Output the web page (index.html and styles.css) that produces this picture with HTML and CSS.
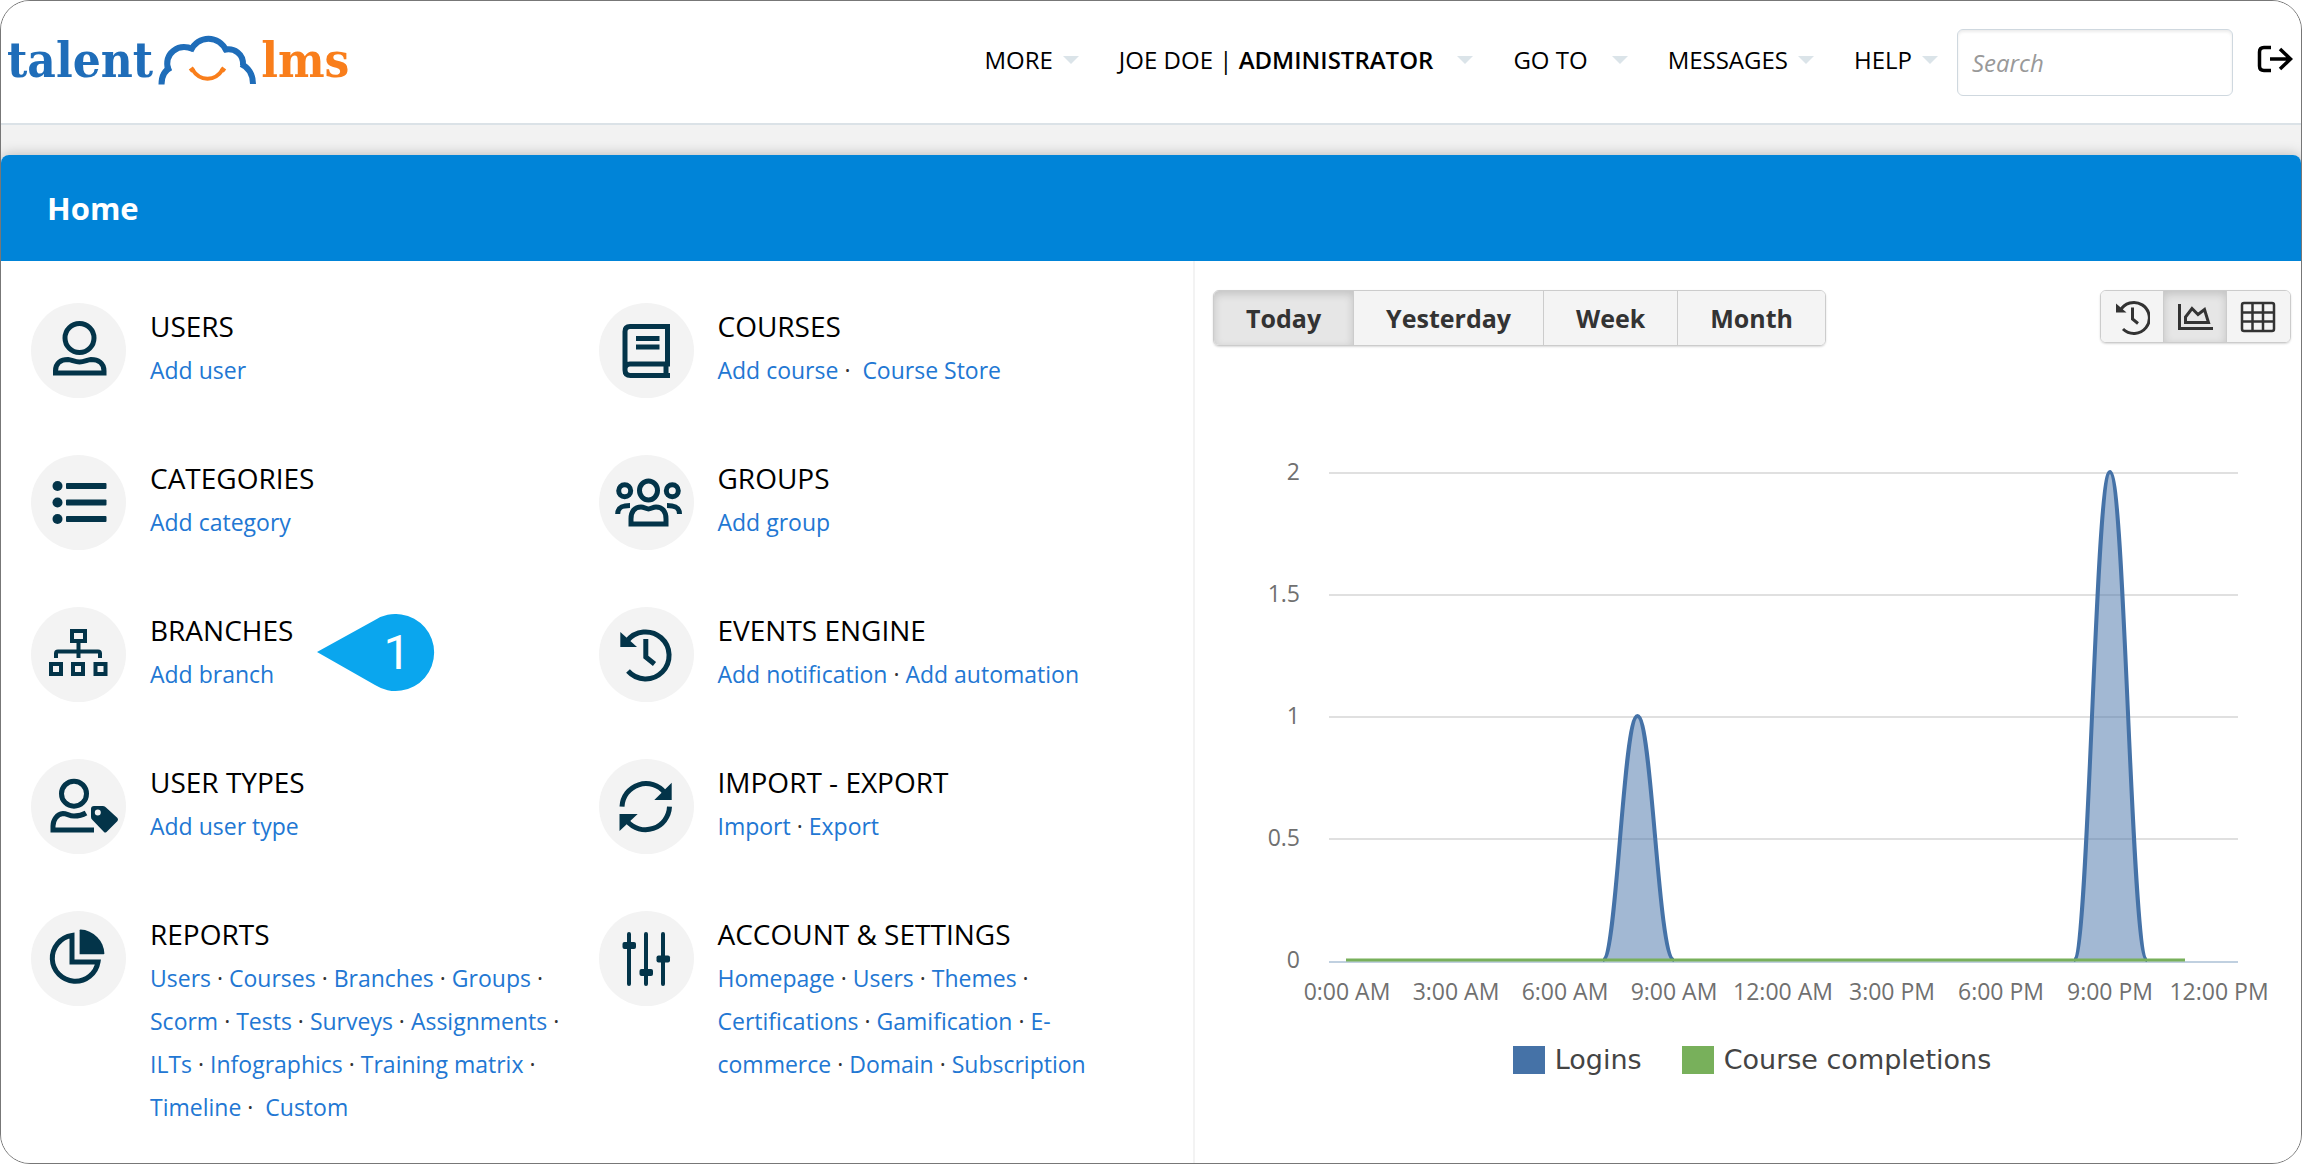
FILE: index.html
```html
<!DOCTYPE html>
<html lang="en">
<head>
<meta charset="utf-8">
<title>TalentLMS - Home</title>
<link rel="stylesheet" href="styles.css">
</head>
<body>
<div class="frame">
  <header class="topbar">
    <a class="logo" href="#" aria-label="talentlms">
      <span class="logo-talent">talent</span>
      <svg class="logo-cloud" viewBox="156 33 102 52" aria-hidden="true">
        <g fill="none" stroke="#1f6db9" stroke-width="6">
          <path d="M161.500 83.500C161.500 75 165 69 171 66.500"/>
          <path d="M168 68.500C164 52 178 42 193 48"/>
          <path d="M190.500 50C198 33.500 219 33.500 226.500 50"/>
          <path d="M223.500 49C234 46 244 53 243 64.500"/>
          <path d="M241 63C248 66 253 73 253 83"/>
        </g>
        <path d="M192 68C200 81 215 81 223 68M190 70L194 67M221 67L225 70" fill="none" stroke="#f97e1b" stroke-width="4"/>
      </svg>
      <span class="logo-lms">lms</span>
    </a>
    <nav class="menu">
      <a class="menu-item" href="#">MORE</a>
      <a class="menu-item menu-wide" href="#"><span>JOE DOE | <b>ADMINISTRATOR</b></span></a>
      <a class="menu-item menu-wide" href="#">GO TO</a>
      <a class="menu-item" href="#">MESSAGES</a>
      <a class="menu-item" href="#">HELP</a>
    </nav>
    <input class="search" type="search" placeholder="Search" aria-label="Search">
    <a class="logout" href="#" aria-label="Log out">
      <svg viewBox="0 0 36 28"><path d="M14 2.500H7Q2.500 2.500 2.500 7V21Q2.500 25.500 7 25.500H14M13 14H33M23 4L33.500 14L23 24" fill="none" stroke="#000" stroke-width="3.500"/></svg>
    </a>
  </header>

  <main class="page">
    <h1 class="page-title">Home</h1>
    <div class="panes">
      <ul class="tiles">
        <li class="tile">
          <svg class="tile-icon" viewBox="0 0 95 95" aria-hidden="true"><circle cx="48.500" cy="35" r="14.500"/><path d="M24.500 70V68C24.500 60 30 56.500 37 56.500C41 57 44 59 48.500 59S56 57 60 56.500C67 56.500 73 60 73 68V70Z"/></svg>
          <div class="tile-body"><h2>USERS</h2><p><a href="#">Add user</a></p></div>
        </li>
        <li class="tile">
          <svg class="tile-icon" viewBox="0 0 95 95" aria-hidden="true"><path d="M68.500 23.500H31Q26 23.500 26 28.500V67Q26 72.500 31.500 72.500H71M71 23.500H68.500V61H31Q26 61 26 66M67 61V72M37 35.500H60.500M37 44H60.500"/></svg>
          <div class="tile-body"><h2>COURSES</h2><p><a href="#">Add course</a> · &nbsp;<a href="#">Course Store</a></p></div>
        </li>
        <li class="tile">
          <svg class="tile-icon" viewBox="0 0 95 95" aria-hidden="true"><g class="solid"><circle cx="26.500" cy="31" r="5"/><circle cx="26.500" cy="47.500" r="5"/><circle cx="26.500" cy="64" r="5"/><rect x="35" y="28" width="40.500" height="6" rx="1"/><rect x="35" y="44.500" width="40.500" height="6" rx="1"/><rect x="35" y="61" width="40.500" height="6" rx="1"/></g></svg>
          <div class="tile-body"><h2>CATEGORIES</h2><p><a href="#">Add category</a></p></div>
        </li>
        <li class="tile">
          <svg class="tile-icon" viewBox="0 0 95 95" aria-hidden="true"><ellipse cx="49.500" cy="35.500" rx="9" ry="9.500"/><circle cx="25.700" cy="35.700" r="6"/><circle cx="73.300" cy="35.700" r="6"/><path d="M32 69V64C32 56 36 52 42 52C45 52 47 54 49.500 54S54 52 57 52C63 52 67 56 67 64V69Z"/><path d="M18.700 59C18.700 53 22 50.500 31 50.500M80.500 59C80.500 53 77 50.500 68 50.500"/></svg>
          <div class="tile-body"><h2>GROUPS</h2><p><a href="#">Add group</a></p></div>
        </li>
        <li class="tile">
          <svg class="tile-icon" viewBox="0 0 95 95" aria-hidden="true"><g class="thin"><rect x="41" y="24" width="13" height="10"/><path d="M47.500 34V51M25 51V46.500Q25 44.500 27 44.500H67Q69 44.500 69 46.500V51"/><rect x="20" y="57" width="10" height="10"/><rect x="42" y="57" width="10" height="10"/><rect x="64.500" y="57" width="10" height="10"/></g></svg>
          <div class="tile-body"><h2>BRANCHES</h2><p><a href="#">Add branch</a></p></div>
          <div class="callout">
            <svg viewBox="0 0 118 78" aria-hidden="true"><path d="M0 38L58 6A38.500 38.500 0 1 1 58 71Z" fill="#0aa6ee"/></svg>
            <span>1</span>
          </div>
        </li>
        <li class="tile">
          <svg class="tile-icon" viewBox="0 0 95 95" aria-hidden="true"><path d="M29 64A23.500 23.500 0 1 0 28 34"/><path d="M46.800 32V50L55.500 57"/><path class="solid" d="M21.300 25L38 40H21.300Z"/></svg>
          <div class="tile-body"><h2>EVENTS ENGINE</h2><p><a href="#">Add notification</a> · <a href="#">Add automation</a></p></div>
        </li>
        <li class="tile">
          <svg class="tile-icon" viewBox="0 0 95 95" aria-hidden="true"><circle cx="43" cy="34.700" r="12.500"/><path d="M55 54C50 57 46 57 43 57C38 57 36 54.500 32 54.500C26 55 22 61 22 67V71H63"/><path class="solid" fill-rule="evenodd" d="M60 50Q60 47 63 47H72Q74 47 75 48.500L86.500 59Q87.500 60.500 86.500 62L75.500 73Q74 74 73 73L61.500 61Q60 60 60 58ZM66.800 50.500A3 3 0 1 0 66.800 56.500A3 3 0 1 0 66.800 50.500Z"/></svg>
          <div class="tile-body"><h2>USER TYPES</h2><p><a href="#">Add user type</a></p></div>
        </li>
        <li class="tile">
          <svg class="tile-icon" viewBox="0 0 95 95" aria-hidden="true"><path d="M23 47.700A24 24 0 0 1 66 34M70.500 47.700A24 24 0 0 1 28 62"/><path class="solid" d="M72.700 23.700V41H55.300ZM20.500 55H38.700L20.500 72Z"/></svg>
          <div class="tile-body"><h2>IMPORT - EXPORT</h2><p><a href="#">Import</a> · <a href="#">Export</a></p></div>
        </li>
        <li class="tile">
          <svg class="tile-icon" viewBox="0 0 95 95" aria-hidden="true"><path d="M41 24.500V51H67A23 23 0 1 1 41 24.500Z"/><path class="solid" d="M49.500 18.600A25 25 0 0 1 73.400 42.500Q73.400 43.300 72.500 43.300H48.600V19.500Q48.600 18.600 49.500 18.600Z"/></svg>
          <div class="tile-body"><h2>REPORTS</h2><p><a href="#">Users</a> · <a href="#">Courses</a> · <a href="#">Branches</a> · <a href="#">Groups</a> · <a href="#">Scorm</a> · <a href="#">Tests</a> · <a href="#">Surveys</a> · <a href="#">Assignments</a> · <a href="#">ILTs</a> · <a href="#">Infographics</a> · <a href="#">Training matrix</a> · <a href="#">Timeline</a> · &nbsp;<a href="#">Custom</a></p></div>
        </li>
        <li class="tile">
          <svg class="tile-icon" viewBox="0 0 95 95" aria-hidden="true"><g class="thin" stroke-linecap="round"><path d="M30 23V73M47 23V73M64 23V73"/></g><g class="solid"><rect x="23.500" y="31" width="13.500" height="7" rx="2"/><rect x="40.500" y="58" width="13.500" height="7" rx="2"/><rect x="57.500" y="44.500" width="13.500" height="7" rx="2"/></g></svg>
          <div class="tile-body"><h2>ACCOUNT &amp; SETTINGS</h2><p><a href="#">Homepage</a> · <a href="#">Users</a> · <a href="#">Themes</a> · <a href="#">Certifications</a> · <a href="#">Gamification</a> · <a href="#">E-commerce</a> · <a href="#">Domain</a> · <a href="#">Subscription</a></p></div>
        </li>
      </ul>

      <section class="stats" aria-label="Activity">
        <div class="toolbar">
          <div class="group periods">
            <button type="button" class="active">Today</button>
            <button type="button">Yesterday</button>
            <button type="button">Week</button>
            <button type="button">Month</button>
          </div>
          <div class="group views">
            <button type="button" aria-label="Timeline"><svg viewBox="0 0 36 36"><g fill="none" stroke="#333" stroke-width="3"><path d="M9 30A15.500 15.500 0 1 0 6 12"/><path d="M18.500 8.500V20L24 24.500"/></g><path d="M2 4.500L12.500 13.500H2Z" fill="#333"/></svg></button>
            <button type="button" class="active" aria-label="Chart"><svg viewBox="0 0 36 36"><path d="M2.500 5V29.500H36M8.500 23.500V18L15 9.500L21 15.500L27.500 10.500L31.500 23.500Z" fill="none" stroke="#333" stroke-width="3"/></svg></button>
            <button type="button" aria-label="Table"><svg viewBox="0 0 36 36"><path d="M4 4H32Q34 4 34 6V30Q34 32 32 32H4Q2 32 2 30V6Q2 4 4 4ZM2 13.500H34M2 22.500H34M12.500 4V32M23 4V32" fill="none" stroke="#333" stroke-width="2.500"/></svg></button>
          </div>
        </div>
        <svg class="chart" viewBox="0 0 1106 664" role="img" aria-label="Logins and course completions">
          <g class="grid"><path d="M134 127H1043M134 249H1043M134 371H1043M134 493H1043"/></g>
          <path class="axis" d="M134 616H1043"/>
          <path class="area" d="M408 614C422 614 428 370 442.500 370S463 614 479 614ZM879 614C894 614 900 126 915 126S936 614 952 614Z"/>
          <path class="line" d="M408 614C422 614 428 370 442.500 370S463 614 479 614M879 614C894 614 900 126 915 126S936 614 952 614"/>
          <path class="done" d="M151 614H990"/>
          <g class="y-label">
            <text x="105" y="134">2</text><text x="105" y="256">1.5</text><text x="105" y="378">1</text><text x="105" y="500">0.5</text><text x="105" y="622">0</text>
          </g>
          <g class="x-label">
            <text x="152" y="654">0:00 AM</text><text x="261" y="654">3:00 AM</text><text x="370" y="654">6:00 AM</text><text x="479" y="654">9:00 AM</text><text x="588" y="654">12:00 AM</text><text x="697" y="654">3:00 PM</text><text x="806" y="654">6:00 PM</text><text x="915" y="654">9:00 PM</text><text x="1024" y="654">12:00 PM</text>
          </g>
        </svg>
        <ul class="legend">
          <li><i class="swatch swatch-logins"></i>Logins</li>
          <li><i class="swatch swatch-done"></i>Course completions</li>
        </ul>
      </section>
    </div>
  </main>
</div>
</body>
</html>
```
FILE: styles.css
```css
* { box-sizing: border-box; }

body {
  margin: 0;
  background: #fff;
  color: #333;
  font: 23px/43px "Open Sans", "Noto Sans", sans-serif;
}

ul, h1, h2, p { margin: 0; padding: 0; list-style: none; }
a { color: #2277d3; text-decoration: none; }
svg { display: block; }

.frame {
  display: flex;
  flex-direction: column;
  min-height: 100vh;
  border: 1px solid #777;
  border-radius: 30px;
  overflow: hidden;
  background: #f2f2f2;
}

/* Top bar */
.topbar {
  display: flex;
  align-items: center;
  height: 124px;
  padding: 0 8px 0 6px;
  border-bottom: 2px solid #dbe2e7;
  background: #fff;
}
.logo {
  display: flex;
  align-items: center;
  gap: 3px;
  margin-right: auto;
  padding-bottom: 4px;
  font: bold 49px/60px "DejaVu Serif Condensed", "DejaVu Serif", serif;
}
.logo-talent { color: #1f6db9; }
.logo-lms { color: #f97e1b; }
.logo-cloud { width: 102px; height: 52px; }

.menu {
  display: flex;
  gap: 40px;
  margin-right: 19px;
  padding-bottom: 5px;
}
.menu-item {
  display: flex;
  align-items: center;
  gap: 10px;
  color: #000;
  font-size: 24px;
  white-space: nowrap;
}
.menu-item b { font-weight: 600; }
.menu-item::after {
  content: "";
  border: 8px solid transparent;
  border-top: 8px solid #dbe4e9;
  border-bottom: 0;
}
.menu-wide { gap: 24px; }

.search {
  width: 276px;
  height: 67px;
  margin-right: 24px;
  padding: 0 14px;
  border: 1px solid #cfd8df;
  border-radius: 6px;
  background: #fff;
  box-shadow: inset 0 2px 3px rgba(0, 0, 0, .08);
  font: italic 24px "Open Sans", sans-serif;
}
.search::placeholder { color: #999; opacity: 1; }
.logout { padding-bottom: 6px; }
.logout svg { width: 36px; height: 28px; }

/* Page */
.page {
  flex: 1;
  display: flex;
  flex-direction: column;
  margin-top: 30px;
  border-radius: 8px 8px 0 0;
  background: #fff;
  box-shadow: 0 0 14px rgba(0, 0, 0, .25);
}
.page-title {
  padding: 32px 46px 31px;
  border-radius: 8px 8px 0 0;
  background: #0084d8;
  color: #fff;
  font-size: 31px;
  line-height: 43px;
}
.panes {
  flex: 1;
  display: grid;
  grid-template-columns: 1192fr 1108fr;
}

/* Tiles */
.tiles {
  display: grid;
  grid-template-columns: 1fr 1fr;
  grid-auto-rows: minmax(152px, auto);
  align-content: start;
  padding: 42px 27px 0 30px;
}
.tile {
  position: relative;
  display: flex;
  align-items: flex-start;
  gap: 24px;
  padding-right: 14px;
}
.tile-icon {
  flex: none;
  width: 95px;
  height: 95px;
  border-radius: 50%;
  background: #f3f3f3;
  fill: none;
  stroke: #033449;
  stroke-width: 5;
}
.tile-icon .thin { stroke-width: 4; }
.tile-icon .solid { fill: #033449; stroke: none; }
.tile-body h2 {
  color: #000;
  font-size: 28px;
  font-weight: 400;
  line-height: 46px;
}

.callout {
  position: absolute;
  top: 7px;
  left: 286px;
  width: 118px;
  height: 78px;
}
.callout span {
  position: absolute;
  inset: 0 0 0 42px;
  color: #fff;
  font: 48px/78px Roboto, sans-serif;
  text-align: center;
}

/* Statistics */
.stats { border-left: 2px solid #f3f3f3; }
.toolbar {
  display: flex;
  justify-content: space-between;
  align-items: flex-start;
  height: 85px;
  padding: 29px 10px 0 18px;
}
.group {
  display: flex;
  border: 1px solid #ccc;
  border-radius: 6px;
  box-shadow: 0 1px 2px rgba(0, 0, 0, .15);
  overflow: hidden;
}
.group button {
  height: 54px;
  padding: 0 32px;
  border: 0;
  border-right: 1px solid #ccc;
  background: #f4f4f4;
  color: #333;
  font: bold 25px "Open Sans", sans-serif;
}
.group button:last-child { border-right: 0; }
.group button.active {
  background: #e6e6e6;
  box-shadow: inset 0 3px 8px rgba(0, 0, 0, .16);
}
.views button { width: 63px; height: 51px; padding: 0 13px; }
.views svg { width: 36px; height: 36px; }

.chart { width: 100%; height: auto; }
.chart path { fill: none; }
.grid { stroke: #e0e0e0; stroke-width: 2; }
.axis { stroke: #c0d0e0; stroke-width: 2; }
.chart .area { fill: rgba(69, 114, 167, .5); }
.line { stroke: #4572a7; stroke-width: 4; stroke-linejoin: round; }
.done { stroke: #78b05b; stroke-width: 3; }
.chart text { fill: #707070; font-size: 23px; }
.y-label { text-anchor: end; }
.x-label { text-anchor: middle; }

.legend {
  display: flex;
  justify-content: center;
  gap: 40px;
  padding: 28px 0 0 8px;
  color: #444;
  font-family: "DejaVu Sans", sans-serif;
  font-size: 27px;
}
.legend li { display: flex; align-items: center; gap: 10px; }
.swatch { width: 32px; height: 28px; }
.swatch-logins { background: #4572a7; }
.swatch-done { background: #78b05b; }
```
